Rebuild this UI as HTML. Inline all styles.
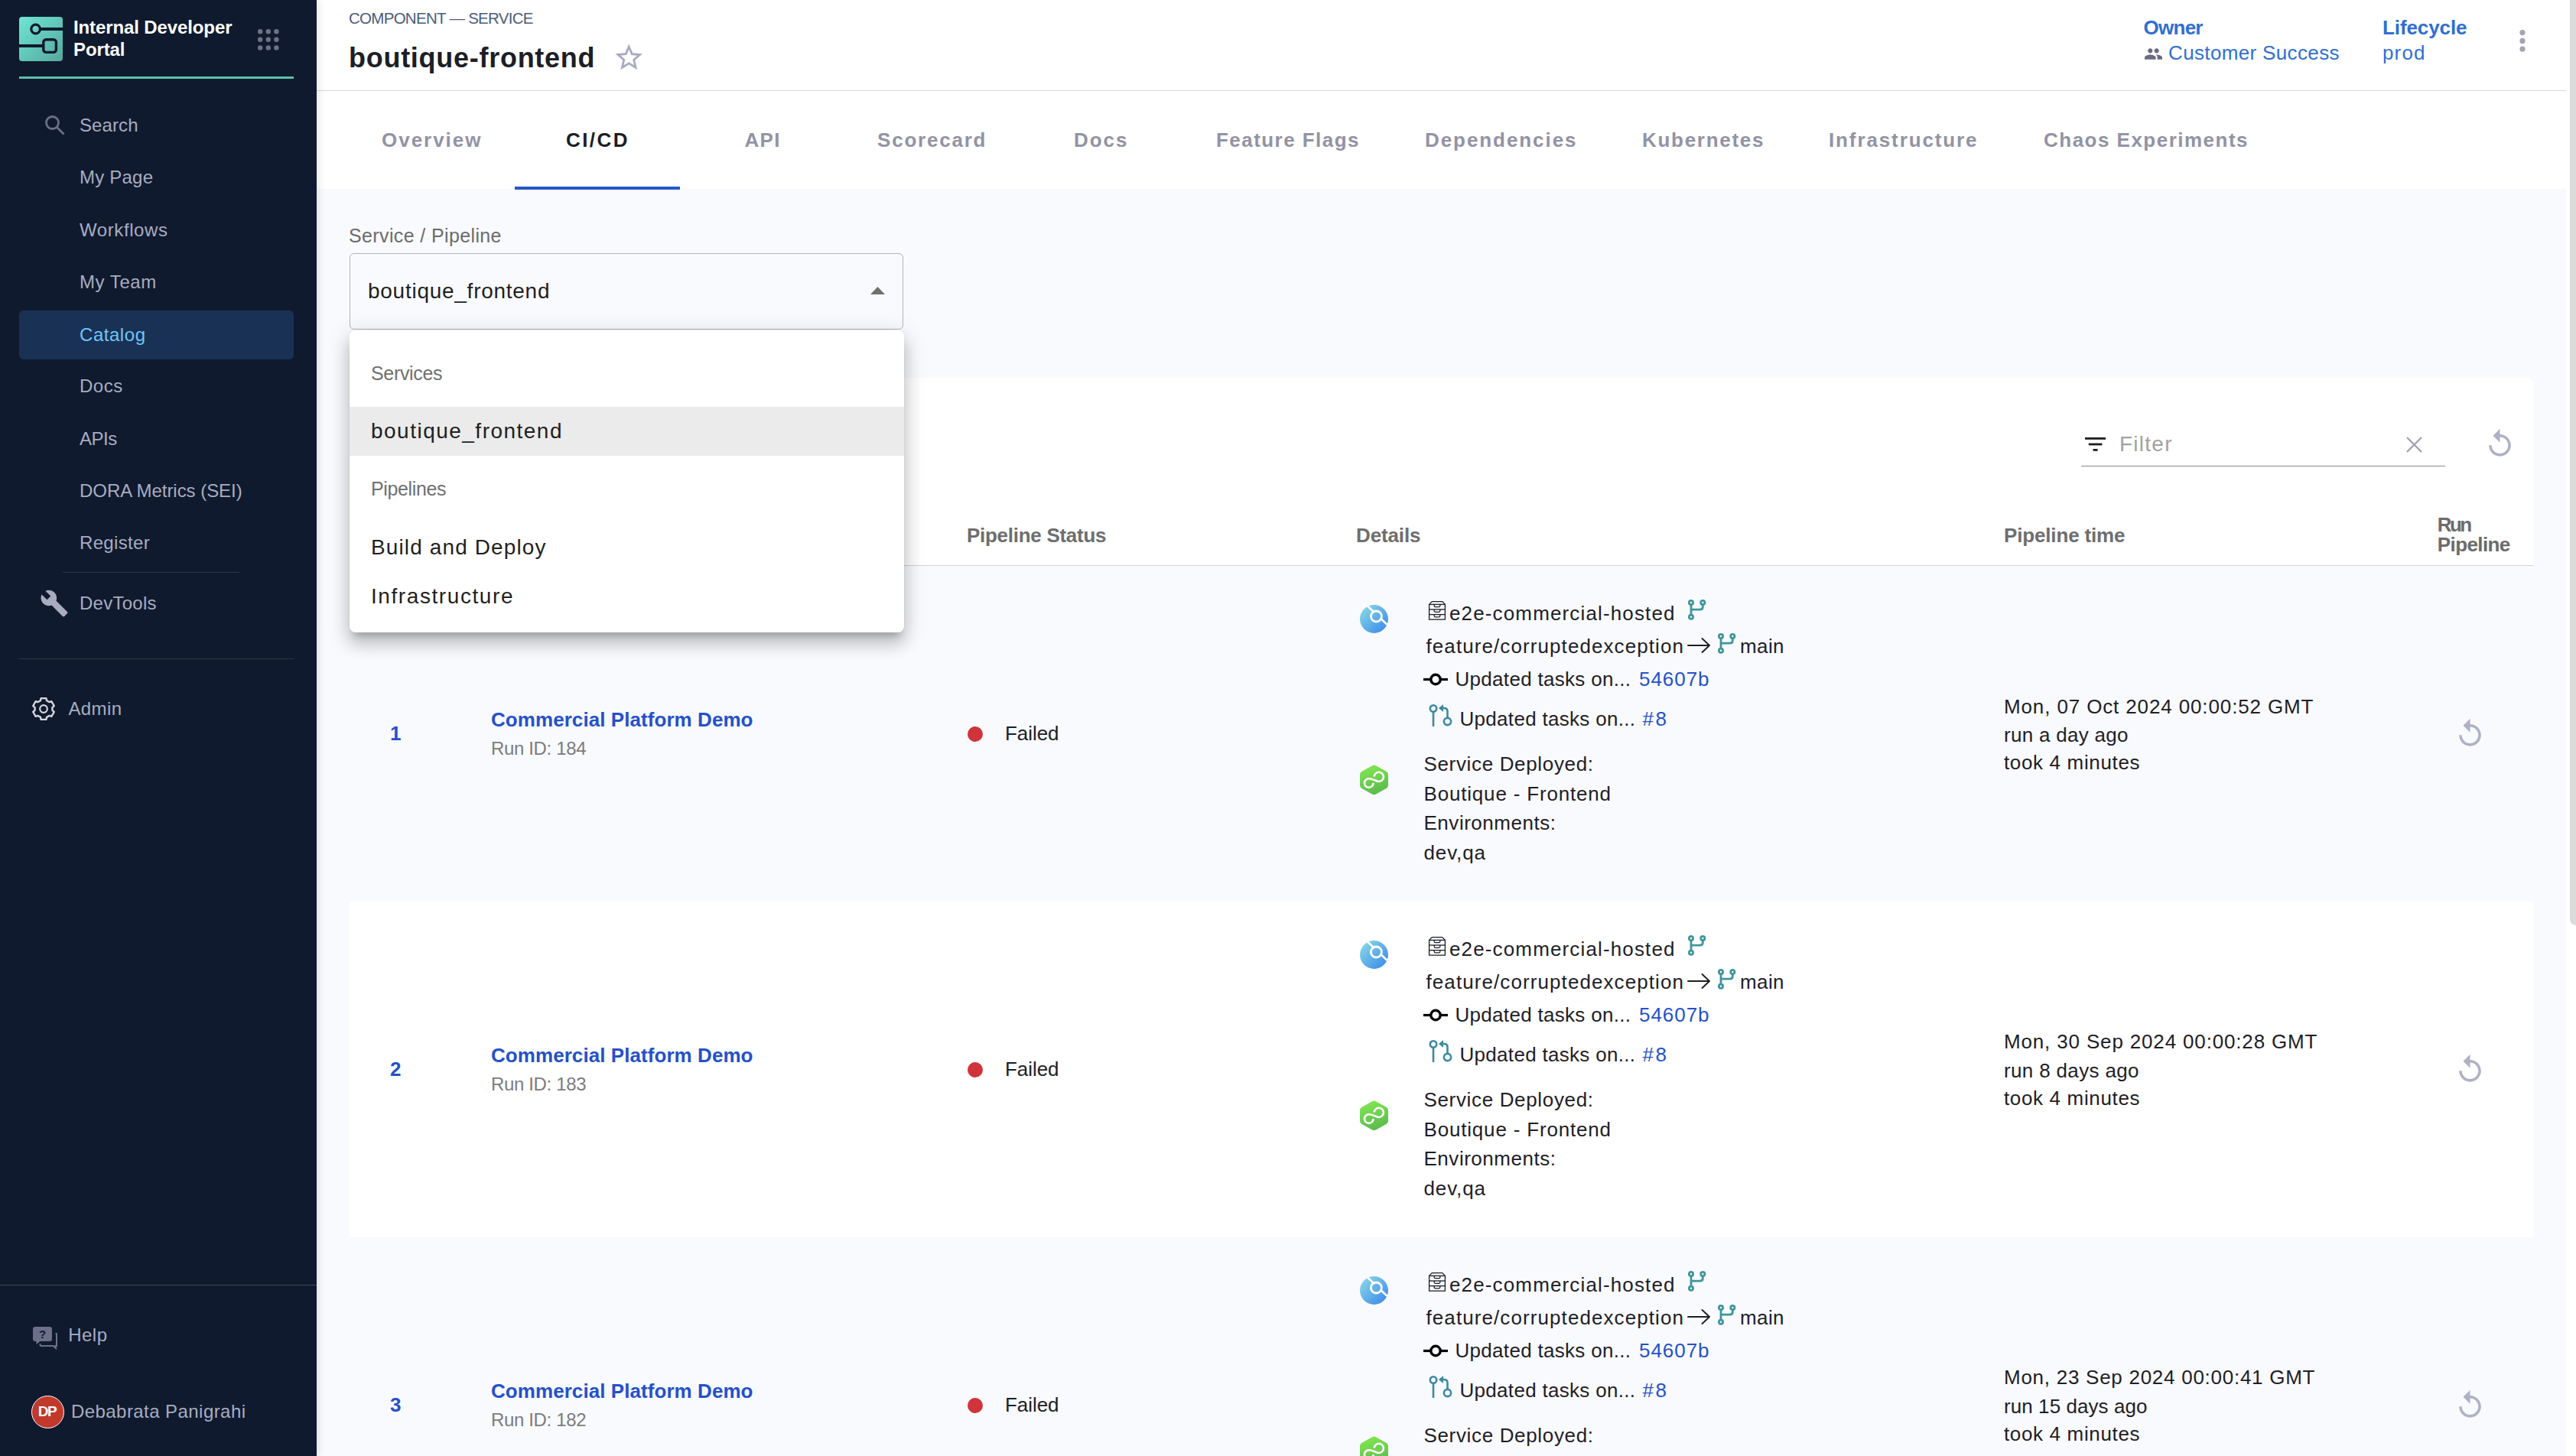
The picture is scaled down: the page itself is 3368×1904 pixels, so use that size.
<!DOCTYPE html>
<html><head><meta charset="utf-8"><style>
html,body{margin:0;padding:0;}
body{width:3368px;height:1904px;overflow:hidden;position:relative;background:#fff;font-family:'Liberation Sans', sans-serif;line-height:1;white-space:nowrap;}
</style></head><body>
<div style="position:absolute;left:414px;top:247px;width:2941px;height:1657px;background:#f9fafd"></div>
<div style="position:absolute;left:414px;top:117.8px;width:2941px;height:1.4000000000000057px;background:#d6d7e3"></div>
<div style="position:absolute;left:673px;top:244px;width:216px;height:4px;background:#2457c9"></div>
<div style="position:absolute;left:457px;top:494px;width:2855px;height:1410px;background:#fff;border-radius:8px 8px 0 0"></div>
<div style="position:absolute;left:457px;top:738.5px;width:2855px;height:1.5px;background:#d2d2d5"></div>
<div style="position:absolute;left:457px;top:740px;width:2855px;height:439px;background:#f9fafd"></div>
<div style="position:absolute;left:457px;top:1618px;width:2855px;height:286px;background:#f9fafd"></div>
<div style="position:absolute;left:0px;top:0px;width:414px;height:1904px;background:#0f1a2e;box-shadow:2px 0 10px rgba(0,0,0,0.12)"></div>
<svg style="position:absolute;left:25px;top:22px" width="57" height="58" viewBox="0 0 57 58"><defs><linearGradient id="lg" x1="0" y1="0" x2="1" y2="1"><stop offset="0" stop-color="#6fe5d6"/><stop offset="1" stop-color="#54a99b"/></linearGradient></defs>
<rect x="0" y="0" width="57" height="58" rx="4" fill="url(#lg)"/>
<circle cx="21.6" cy="16" r="5.8" fill="none" stroke="#0f1a2e" stroke-width="3.2"/>
<rect x="27" y="14" width="30" height="4" fill="#0f1a2e"/>
<rect x="31.8" y="29.8" width="16.6" height="16.6" rx="3.5" fill="none" stroke="#0f1a2e" stroke-width="3.4"/>
<rect x="0" y="36" width="31" height="4" fill="#0f1a2e"/></svg>
<svg style="position:absolute;left:337px;top:38px" width="28" height="28" viewBox="0 0 28 28"><circle cx="3.2" cy="3.2" r="3.2" fill="#6f7187"/><circle cx="3.2" cy="13.8" r="3.2" fill="#6f7187"/><circle cx="3.2" cy="24.4" r="3.2" fill="#6f7187"/><circle cx="13.8" cy="3.2" r="3.2" fill="#6f7187"/><circle cx="13.8" cy="13.8" r="3.2" fill="#6f7187"/><circle cx="13.8" cy="24.4" r="3.2" fill="#6f7187"/><circle cx="24.4" cy="3.2" r="3.2" fill="#6f7187"/><circle cx="24.4" cy="13.8" r="3.2" fill="#6f7187"/><circle cx="24.4" cy="24.4" r="3.2" fill="#6f7187"/></svg>
<div style="position:absolute;left:25px;top:100px;width:359px;height:3px;background:#5bbfa9"></div>
<svg style="position:absolute;left:58px;top:150px" width="27" height="27" viewBox="0 0 27 27"><circle cx="10.5" cy="10.5" r="8" fill="none" stroke="#6c6f86" stroke-width="2.8"/><line x1="16.5" y1="16.5" x2="25.5" y2="25.5" stroke="#6c6f86" stroke-width="2.8"/></svg>
<div style="position:absolute;left:25px;top:406px;width:359px;height:64px;background:#1a3156;border-radius:6px"></div>
<div style="position:absolute;left:82px;top:747.5px;width:231px;height:1.5px;background:#2e3647"></div>
<div style="position:absolute;left:25px;top:860.8px;width:359px;height:1.400000000000091px;background:#2e3647"></div>
<svg style="position:absolute;left:52px;top:770px" width="38" height="38" viewBox="0 0 24 24"><path d="M22.7 19l-9.1-9.1c.9-2.3.4-5-1.5-6.9-2-2-5-2.4-7.4-1.3L9 6 6 9 1.6 4.7C.4 7.1.9 10.1 2.9 12.1c1.9 1.9 4.6 2.4 6.9 1.5l9.1 9.1c.4.4 1 .4 1.4 0l2.3-2.3c.5-.4.5-1.1.1-1.4z" fill="#a9acc1"/></svg>
<svg style="position:absolute;left:41.2px;top:910.7px" width="32" height="32" viewBox="0 0 32 32"><path d="M11.91 5.14 L12.60 2.11 L19.40 2.11 L20.09 5.14 L23.36 7.03 L26.33 6.11 L29.73 12.00 L27.45 14.11 L27.45 17.89 L29.73 20.00 L26.33 25.89 L23.36 24.97 L20.09 26.86 L19.40 29.89 L12.60 29.89 L11.91 26.86 L8.64 24.97 L5.67 25.89 L2.27 20.00 L4.55 17.89 L4.55 14.11 L2.27 12.00 L5.67 6.11 L8.64 7.03 Z" fill="none" stroke="#d6d6d9" stroke-width="2.4" stroke-linejoin="round"/><circle cx="16" cy="16" r="4.8" fill="none" stroke="#d6d6d9" stroke-width="2.2"/></svg>
<svg style="position:absolute;left:43px;top:1735px" width="33" height="30" viewBox="0 0 33 30"><path d="M3 0 H22 Q25 0 25 3 V16 Q25 19 22 19 H9.5 L4.5 23 V19 H3 Q0 19 0 16 V3 Q0 0 3 0 Z" fill="#6e7089"/><text x="12.5" y="15" font-family="Liberation Sans" font-weight="700" font-size="15" text-anchor="middle" fill="#0f1a2e">?</text><path d="M29.5 9 H31 V25 H29.5 L30 28 L26.5 25 H11 Q9.5 25 9.5 23.5 V22" fill="none" stroke="#6e7089" stroke-width="2"/></svg>
<div style="position:absolute;left:0px;top:1679.5px;width:414px;height:1.5px;background:#414858"></div>
<div style="position:absolute;left:41px;top:1825px;width:43px;height:43px;background:#c0392b;border-radius:50%;border:1.5px solid #fff;box-sizing:border-box"></div>
<svg style="position:absolute;left:800.8px;top:54.4px" width="42.5" height="42.5" viewBox="0 0 24 24"><path d="M22 9.24l-7.19-.62L12 2 9.19 8.63 2 9.24l5.46 4.73L5.82 21 12 17.27 18.18 21l-1.63-7.03L22 9.24zM12 15.4l-3.76 2.27 1-4.28-3.32-2.88 4.38-.38L12 6.1l1.710 4.04 4.38.38-3.32 2.88 1 4.28L12 15.4z" fill="#a9abc0"/></svg>
<svg style="position:absolute;left:2803px;top:58px" width="25" height="25" viewBox="0 0 24 24"><path d="M16 11c1.66 0 2.99-1.34 2.99-3S17.66 5 16 5c-1.66 0-3 1.34-3 3s1.34 3 3 3zm-8 0c1.66 0 2.990-1.34 2.99-3S9.66 5 8 5C6.34 5 5 6.34 5 8s1.34 3 3 3zm0 2c-2.33 0-7 1.17-7 3.5V19h14v-2.5c0-2.33-4.67-3.5-7-3.5zm8 0c-.29 0-.62.02-.97.05 1.16.84 1.970 1.97 1.97 3.45V19h6v-2.5c0-2.33-4.67-3.5-7-3.5z" fill="#686b83"/></svg>
<svg style="position:absolute;left:3293px;top:39px" width="10" height="30" viewBox="0 0 10 30"><circle cx="5" cy="3.6" r="3.6" fill="#a3a5b5"/><circle cx="5" cy="14.4" r="3.6" fill="#a3a5b5"/><circle cx="5" cy="25.200000000000003" r="3.6" fill="#a3a5b5"/></svg>
<div style="position:absolute;left:457px;top:331px;width:724px;height:100px;border:1.5px solid #b4b4b8;border-radius:6px;box-sizing:border-box"></div>
<svg style="position:absolute;left:1138px;top:375px" width="19" height="10" viewBox="0 0 19 10"><path d="M0 10 L9.5 0 L19 10 Z" fill="#6f6f6f"/></svg>
<svg style="position:absolute;left:2725.5px;top:572px" width="28" height="19" viewBox="0 0 28 19"><rect x="0" y="0" width="27" height="2.8" fill="#1b1d24"/><rect x="4.8" y="7.6" width="17.6" height="2.8" fill="#1b1d24"/><rect x="10.6" y="15" width="6" height="2.8" fill="#1b1d24"/></svg>
<svg style="position:absolute;left:3146px;top:571px" width="21" height="21" viewBox="0 0 21 21"><path d="M1 1 L20 20 M20 1 L1 20" stroke="#9fa1b6" stroke-width="2.4"/></svg>
<div style="position:absolute;left:2721px;top:609px;width:476px;height:1px;background:#8a8a8a"></div>
<svg style="position:absolute;left:3247px;top:559px" width="43" height="43" viewBox="0 0 24 24"><path d="M12 5V1L7 6l5 5V7c3.31 0 6 2.69 6 6s-2.69 6-6 6-6-2.69-6-6H4c0 4.42 3.58 8 8 8s8-3.58 8-8-3.58-8-8-8z" fill="#afb1c5"/></svg>
<div style="position:absolute;left:1265px;top:950.0px;width:20px;height:20.0px;background:#d0343a;border-radius:50%"></div>
<svg style="position:absolute;left:1778px;top:791.0px" width="37" height="37" viewBox="0 0 37 37"><defs><linearGradient id="bg0" gradientUnits="userSpaceOnUse" x1="4" y1="4" x2="33" y2="33"><stop offset="0" stop-color="#86d4e6"/><stop offset="1" stop-color="#3f8eec"/></linearGradient></defs><circle cx="18.5" cy="18.5" r="18.5" fill="url(#bg0)"/><line x1="9.5" y1="1" x2="35.5" y2="25.8" stroke="#fff" stroke-width="2.6"/><circle cx="21.4" cy="15" r="7" fill="url(#bg0)" stroke="#fff" stroke-width="2.8"/></svg>
<svg style="position:absolute;left:1778px;top:1000.0px" width="37" height="40" viewBox="0 0 37 40"><defs><linearGradient id="gg0" x1="0" y1="0" x2="0.3" y2="1"><stop offset="0" stop-color="#86ea52"/><stop offset="1" stop-color="#5dbd4e"/></linearGradient></defs><path d="M16 1.2 Q18.5 0 21 1.2 L34.5 8.8 Q37 10.2 37 13 V27 Q37 29.6 34.5 31 L21 38.6 Q18.5 40 16 38.6 L2.5 31 Q0 29.6 0 27 V13 Q0 10.2 2.5 8.8 Z" fill="url(#gg0)"/><path d="M17.5 24.1 A5.8 5.8 0 1 1 11.7 18.3 C14.5 18.3 16 19 18.3 19.8 C20.5 20.7 22.5 22 24.9 22 A6.1 6.1 0 1 0 18.7 15.5" fill="none" stroke="#fff" stroke-width="2.6"/></svg>
<svg style="position:absolute;left:1867px;top:785.0px" width="24" height="27" viewBox="0 0 24 27"><g transform="translate(1 1)"><path d="M0.6 4.4 L4.2 0.6 H17.8 L21.4 4.4 V24.2 H0.6 Z" fill="none" stroke="#1b1d24" stroke-width="1.3" stroke-linejoin="round"/><line x1="0.6" y1="4.4" x2="21.4" y2="4.4" stroke="#1b1d24" stroke-width="1.3"/><line x1="0.6" y1="11" x2="21.4" y2="11" stroke="#1b1d24" stroke-width="1.3"/><line x1="0.6" y1="17.6" x2="21.4" y2="17.6" stroke="#1b1d24" stroke-width="1.3"/><path d="M7.2 4.4 V6.2 Q7.2 7.7 8.7 7.7 H13.3 Q14.8 7.7 14.8 6.2 V4.4" fill="none" stroke="#1b1d24" stroke-width="1.3"/><path d="M7.2 11 V12.8 Q7.2 14.3 8.7 14.3 H13.3 Q14.8 14.3 14.8 12.8 V11" fill="none" stroke="#1b1d24" stroke-width="1.3"/><path d="M7.2 17.6 V19.400000000000002 Q7.2 20.900000000000002 8.7 20.900000000000002 H13.3 Q14.8 20.900000000000002 14.8 19.400000000000002 V17.6" fill="none" stroke="#1b1d24" stroke-width="1.3"/></g></svg>
<svg style="position:absolute;left:2206.8px;top:784.1px" width="24" height="27" viewBox="0 0 24 27"><g transform="translate(4 4)" fill="none" stroke="#3f969c" stroke-width="2.8"><circle cx="0" cy="0" r="2.6"/><circle cx="15.3" cy="0" r="2.6"/><circle cx="0" cy="18.8" r="2.6"/><path d="M0 2.6 V16.2 M0 9.2 H11.5 Q15.3 9.2 15.3 5.4 V2.6"/></g></svg>
<svg style="position:absolute;left:2206px;top:834.0px" width="31" height="21" viewBox="0 0 31 21"><path d="M1 10 H29 M19.5 1 L29 10 L19.5 19" fill="none" stroke="#1e2027" stroke-width="1.9" stroke-linecap="round" stroke-linejoin="round"/></svg>
<svg style="position:absolute;left:2245.7px;top:827.9px" width="24" height="27" viewBox="0 0 24 27"><g transform="translate(4 4)" fill="none" stroke="#3f969c" stroke-width="2.8"><circle cx="0" cy="0" r="2.6"/><circle cx="15.3" cy="0" r="2.6"/><circle cx="0" cy="18.8" r="2.6"/><path d="M0 2.6 V16.2 M0 9.2 H11.5 Q15.3 9.2 15.3 5.4 V2.6"/></g></svg>
<svg style="position:absolute;left:1861px;top:879.0px" width="32" height="19" viewBox="0 0 32 19"><circle cx="16" cy="9.5" r="6.2" fill="none" stroke="#000" stroke-width="3.4"/><line x1="0" y1="9.5" x2="9.8" y2="9.5" stroke="#000" stroke-width="3.2"/><line x1="22.2" y1="9.5" x2="32" y2="9.5" stroke="#000" stroke-width="3.2"/></svg>
<svg style="position:absolute;left:1867px;top:921.0px" width="33" height="29" viewBox="0 0 33 29"><circle cx="7" cy="5.5" r="4.2" fill="none" stroke="#3d8aa0" stroke-width="2.6"/><line x1="7" y1="10" x2="7" y2="29" stroke="#3d8aa0" stroke-width="2.6"/><circle cx="25.5" cy="22.5" r="4.6" fill="none" stroke="#3d8aa0" stroke-width="2.6"/><path d="M25.5 18 L25.5 9 Q25.5 5 21 5 L18 5" fill="none" stroke="#3d8aa0" stroke-width="2.6"/><path d="M20 0 L14 5 L20 10 Z" fill="#3d8aa0"/></svg>
<svg style="position:absolute;left:3208px;top:938.0px" width="43" height="43" viewBox="0 0 24 24"><path d="M12 5V1L7 6l5 5V7c3.31 0 6 2.69 6 6s-2.69 6-6 6-6-2.69-6-6H4c0 4.42 3.58 8 8 8s8-3.58 8-8-3.58-8-8-8z" fill="#afb1c5"/></svg>
<div style="position:absolute;left:1265px;top:1388.9px;width:20px;height:20.0px;background:#d0343a;border-radius:50%"></div>
<svg style="position:absolute;left:1778px;top:1229.9px" width="37" height="37" viewBox="0 0 37 37"><defs><linearGradient id="bg1" gradientUnits="userSpaceOnUse" x1="4" y1="4" x2="33" y2="33"><stop offset="0" stop-color="#86d4e6"/><stop offset="1" stop-color="#3f8eec"/></linearGradient></defs><circle cx="18.5" cy="18.5" r="18.5" fill="url(#bg1)"/><line x1="9.5" y1="1" x2="35.5" y2="25.8" stroke="#fff" stroke-width="2.6"/><circle cx="21.4" cy="15" r="7" fill="url(#bg1)" stroke="#fff" stroke-width="2.8"/></svg>
<svg style="position:absolute;left:1778px;top:1438.9px" width="37" height="40" viewBox="0 0 37 40"><defs><linearGradient id="gg1" x1="0" y1="0" x2="0.3" y2="1"><stop offset="0" stop-color="#86ea52"/><stop offset="1" stop-color="#5dbd4e"/></linearGradient></defs><path d="M16 1.2 Q18.5 0 21 1.2 L34.5 8.8 Q37 10.2 37 13 V27 Q37 29.6 34.5 31 L21 38.6 Q18.5 40 16 38.6 L2.5 31 Q0 29.6 0 27 V13 Q0 10.2 2.5 8.8 Z" fill="url(#gg1)"/><path d="M17.5 24.1 A5.8 5.8 0 1 1 11.7 18.3 C14.5 18.3 16 19 18.3 19.8 C20.5 20.7 22.5 22 24.9 22 A6.1 6.1 0 1 0 18.7 15.5" fill="none" stroke="#fff" stroke-width="2.6"/></svg>
<svg style="position:absolute;left:1867px;top:1223.9px" width="24" height="27" viewBox="0 0 24 27"><g transform="translate(1 1)"><path d="M0.6 4.4 L4.2 0.6 H17.8 L21.4 4.4 V24.2 H0.6 Z" fill="none" stroke="#1b1d24" stroke-width="1.3" stroke-linejoin="round"/><line x1="0.6" y1="4.4" x2="21.4" y2="4.4" stroke="#1b1d24" stroke-width="1.3"/><line x1="0.6" y1="11" x2="21.4" y2="11" stroke="#1b1d24" stroke-width="1.3"/><line x1="0.6" y1="17.6" x2="21.4" y2="17.6" stroke="#1b1d24" stroke-width="1.3"/><path d="M7.2 4.4 V6.2 Q7.2 7.7 8.7 7.7 H13.3 Q14.8 7.7 14.8 6.2 V4.4" fill="none" stroke="#1b1d24" stroke-width="1.3"/><path d="M7.2 11 V12.8 Q7.2 14.3 8.7 14.3 H13.3 Q14.8 14.3 14.8 12.8 V11" fill="none" stroke="#1b1d24" stroke-width="1.3"/><path d="M7.2 17.6 V19.400000000000002 Q7.2 20.900000000000002 8.7 20.900000000000002 H13.3 Q14.8 20.900000000000002 14.8 19.400000000000002 V17.6" fill="none" stroke="#1b1d24" stroke-width="1.3"/></g></svg>
<svg style="position:absolute;left:2206.8px;top:1223.0px" width="24" height="27" viewBox="0 0 24 27"><g transform="translate(4 4)" fill="none" stroke="#3f969c" stroke-width="2.8"><circle cx="0" cy="0" r="2.6"/><circle cx="15.3" cy="0" r="2.6"/><circle cx="0" cy="18.8" r="2.6"/><path d="M0 2.6 V16.2 M0 9.2 H11.5 Q15.3 9.2 15.3 5.4 V2.6"/></g></svg>
<svg style="position:absolute;left:2206px;top:1272.9px" width="31" height="21" viewBox="0 0 31 21"><path d="M1 10 H29 M19.5 1 L29 10 L19.5 19" fill="none" stroke="#1e2027" stroke-width="1.9" stroke-linecap="round" stroke-linejoin="round"/></svg>
<svg style="position:absolute;left:2245.7px;top:1266.8px" width="24" height="27" viewBox="0 0 24 27"><g transform="translate(4 4)" fill="none" stroke="#3f969c" stroke-width="2.8"><circle cx="0" cy="0" r="2.6"/><circle cx="15.3" cy="0" r="2.6"/><circle cx="0" cy="18.8" r="2.6"/><path d="M0 2.6 V16.2 M0 9.2 H11.5 Q15.3 9.2 15.3 5.4 V2.6"/></g></svg>
<svg style="position:absolute;left:1861px;top:1317.9px" width="32" height="19" viewBox="0 0 32 19"><circle cx="16" cy="9.5" r="6.2" fill="none" stroke="#000" stroke-width="3.4"/><line x1="0" y1="9.5" x2="9.8" y2="9.5" stroke="#000" stroke-width="3.2"/><line x1="22.2" y1="9.5" x2="32" y2="9.5" stroke="#000" stroke-width="3.2"/></svg>
<svg style="position:absolute;left:1867px;top:1359.9px" width="33" height="29" viewBox="0 0 33 29"><circle cx="7" cy="5.5" r="4.2" fill="none" stroke="#3d8aa0" stroke-width="2.6"/><line x1="7" y1="10" x2="7" y2="29" stroke="#3d8aa0" stroke-width="2.6"/><circle cx="25.5" cy="22.5" r="4.6" fill="none" stroke="#3d8aa0" stroke-width="2.6"/><path d="M25.5 18 L25.5 9 Q25.5 5 21 5 L18 5" fill="none" stroke="#3d8aa0" stroke-width="2.6"/><path d="M20 0 L14 5 L20 10 Z" fill="#3d8aa0"/></svg>
<svg style="position:absolute;left:3208px;top:1376.9px" width="43" height="43" viewBox="0 0 24 24"><path d="M12 5V1L7 6l5 5V7c3.31 0 6 2.69 6 6s-2.69 6-6 6-6-2.69-6-6H4c0 4.42 3.58 8 8 8s8-3.58 8-8-3.58-8-8-8z" fill="#afb1c5"/></svg>
<div style="position:absolute;left:1265px;top:1827.8px;width:20px;height:20.0px;background:#d0343a;border-radius:50%"></div>
<svg style="position:absolute;left:1778px;top:1668.8px" width="37" height="37" viewBox="0 0 37 37"><defs><linearGradient id="bg2" gradientUnits="userSpaceOnUse" x1="4" y1="4" x2="33" y2="33"><stop offset="0" stop-color="#86d4e6"/><stop offset="1" stop-color="#3f8eec"/></linearGradient></defs><circle cx="18.5" cy="18.5" r="18.5" fill="url(#bg2)"/><line x1="9.5" y1="1" x2="35.5" y2="25.8" stroke="#fff" stroke-width="2.6"/><circle cx="21.4" cy="15" r="7" fill="url(#bg2)" stroke="#fff" stroke-width="2.8"/></svg>
<svg style="position:absolute;left:1778px;top:1877.8px" width="37" height="40" viewBox="0 0 37 40"><defs><linearGradient id="gg2" x1="0" y1="0" x2="0.3" y2="1"><stop offset="0" stop-color="#86ea52"/><stop offset="1" stop-color="#5dbd4e"/></linearGradient></defs><path d="M16 1.2 Q18.5 0 21 1.2 L34.5 8.8 Q37 10.2 37 13 V27 Q37 29.6 34.5 31 L21 38.6 Q18.5 40 16 38.6 L2.5 31 Q0 29.6 0 27 V13 Q0 10.2 2.5 8.8 Z" fill="url(#gg2)"/><path d="M17.5 24.1 A5.8 5.8 0 1 1 11.7 18.3 C14.5 18.3 16 19 18.3 19.8 C20.5 20.7 22.5 22 24.9 22 A6.1 6.1 0 1 0 18.7 15.5" fill="none" stroke="#fff" stroke-width="2.6"/></svg>
<svg style="position:absolute;left:1867px;top:1662.8px" width="24" height="27" viewBox="0 0 24 27"><g transform="translate(1 1)"><path d="M0.6 4.4 L4.2 0.6 H17.8 L21.4 4.4 V24.2 H0.6 Z" fill="none" stroke="#1b1d24" stroke-width="1.3" stroke-linejoin="round"/><line x1="0.6" y1="4.4" x2="21.4" y2="4.4" stroke="#1b1d24" stroke-width="1.3"/><line x1="0.6" y1="11" x2="21.4" y2="11" stroke="#1b1d24" stroke-width="1.3"/><line x1="0.6" y1="17.6" x2="21.4" y2="17.6" stroke="#1b1d24" stroke-width="1.3"/><path d="M7.2 4.4 V6.2 Q7.2 7.7 8.7 7.7 H13.3 Q14.8 7.7 14.8 6.2 V4.4" fill="none" stroke="#1b1d24" stroke-width="1.3"/><path d="M7.2 11 V12.8 Q7.2 14.3 8.7 14.3 H13.3 Q14.8 14.3 14.8 12.8 V11" fill="none" stroke="#1b1d24" stroke-width="1.3"/><path d="M7.2 17.6 V19.400000000000002 Q7.2 20.900000000000002 8.7 20.900000000000002 H13.3 Q14.8 20.900000000000002 14.8 19.400000000000002 V17.6" fill="none" stroke="#1b1d24" stroke-width="1.3"/></g></svg>
<svg style="position:absolute;left:2206.8px;top:1661.9px" width="24" height="27" viewBox="0 0 24 27"><g transform="translate(4 4)" fill="none" stroke="#3f969c" stroke-width="2.8"><circle cx="0" cy="0" r="2.6"/><circle cx="15.3" cy="0" r="2.6"/><circle cx="0" cy="18.8" r="2.6"/><path d="M0 2.6 V16.2 M0 9.2 H11.5 Q15.3 9.2 15.3 5.4 V2.6"/></g></svg>
<svg style="position:absolute;left:2206px;top:1711.8px" width="31" height="21" viewBox="0 0 31 21"><path d="M1 10 H29 M19.5 1 L29 10 L19.5 19" fill="none" stroke="#1e2027" stroke-width="1.9" stroke-linecap="round" stroke-linejoin="round"/></svg>
<svg style="position:absolute;left:2245.7px;top:1705.6999999999998px" width="24" height="27" viewBox="0 0 24 27"><g transform="translate(4 4)" fill="none" stroke="#3f969c" stroke-width="2.8"><circle cx="0" cy="0" r="2.6"/><circle cx="15.3" cy="0" r="2.6"/><circle cx="0" cy="18.8" r="2.6"/><path d="M0 2.6 V16.2 M0 9.2 H11.5 Q15.3 9.2 15.3 5.4 V2.6"/></g></svg>
<svg style="position:absolute;left:1861px;top:1756.8px" width="32" height="19" viewBox="0 0 32 19"><circle cx="16" cy="9.5" r="6.2" fill="none" stroke="#000" stroke-width="3.4"/><line x1="0" y1="9.5" x2="9.8" y2="9.5" stroke="#000" stroke-width="3.2"/><line x1="22.2" y1="9.5" x2="32" y2="9.5" stroke="#000" stroke-width="3.2"/></svg>
<svg style="position:absolute;left:1867px;top:1798.8px" width="33" height="29" viewBox="0 0 33 29"><circle cx="7" cy="5.5" r="4.2" fill="none" stroke="#3d8aa0" stroke-width="2.6"/><line x1="7" y1="10" x2="7" y2="29" stroke="#3d8aa0" stroke-width="2.6"/><circle cx="25.5" cy="22.5" r="4.6" fill="none" stroke="#3d8aa0" stroke-width="2.6"/><path d="M25.5 18 L25.5 9 Q25.5 5 21 5 L18 5" fill="none" stroke="#3d8aa0" stroke-width="2.6"/><path d="M20 0 L14 5 L20 10 Z" fill="#3d8aa0"/></svg>
<svg style="position:absolute;left:3208px;top:1815.8px" width="43" height="43" viewBox="0 0 24 24"><path d="M12 5V1L7 6l5 5V7c3.31 0 6 2.69 6 6s-2.69 6-6 6-6-2.69-6-6H4c0 4.42 3.58 8 8 8s8-3.58 8-8-3.58-8-8-8z" fill="#afb1c5"/></svg>
<div id="t0" style="position:absolute;left:96.00px;top:23.60px;font-size:24px;font-weight:700;color:#ffffff;letter-spacing:-0.112px;">Internal Developer</div>
<div id="t1" style="position:absolute;left:96.00px;top:52.60px;font-size:24px;font-weight:700;color:#ffffff;letter-spacing:-0.103px;">Portal</div>
<div id="t2" style="position:absolute;left:104.00px;top:151.90px;font-size:24px;font-weight:400;color:#a9acc1;letter-spacing:0.091px;">Search</div>
<div id="t3" style="position:absolute;left:104.00px;top:219.90px;font-size:24px;font-weight:400;color:#a9acc1;letter-spacing:0.214px;">My Page</div>
<div id="t4" style="position:absolute;left:104.00px;top:288.60px;font-size:24px;font-weight:400;color:#a9acc1;letter-spacing:0.581px;">Workflows</div>
<div id="t5" style="position:absolute;left:104.00px;top:356.80px;font-size:24px;font-weight:400;color:#a9acc1;letter-spacing:0.546px;">My Team</div>
<div id="t6" style="position:absolute;left:104.00px;top:426.20px;font-size:24px;font-weight:400;color:#6fc6f7;letter-spacing:0.544px;">Catalog</div>
<div id="t7" style="position:absolute;left:104.00px;top:493.30px;font-size:24px;font-weight:400;color:#a9acc1;letter-spacing:0.504px;">Docs</div>
<div id="t8" style="position:absolute;left:104.00px;top:561.90px;font-size:24px;font-weight:400;color:#a9acc1;letter-spacing:-0.496px;">APIs</div>
<div id="t9" style="position:absolute;left:104.00px;top:630.20px;font-size:24px;font-weight:400;color:#a9acc1;letter-spacing:-0.039px;">DORA Metrics (SEI)</div>
<div id="t10" style="position:absolute;left:104.00px;top:698.20px;font-size:24px;font-weight:400;color:#a9acc1;letter-spacing:0.346px;">Register</div>
<div id="t11" style="position:absolute;left:104.00px;top:776.60px;font-size:24px;font-weight:400;color:#a9acc1;letter-spacing:0.254px;">DevTools</div>
<div id="t12" style="position:absolute;left:89.50px;top:914.60px;font-size:24px;font-weight:400;color:#a9acc1;letter-spacing:0.367px;">Admin</div>
<div id="t13" style="position:absolute;left:89.20px;top:1734.10px;font-size:24px;font-weight:400;color:#a9acc1;letter-spacing:0.480px;">Help</div>
<div id="t14" style="position:absolute;left:49.70px;top:1836.05px;font-size:19px;font-weight:700;color:#ffffff;letter-spacing:-1.506px;">DP</div>
<div id="t15" style="position:absolute;left:93.00px;top:1833.90px;font-size:24px;font-weight:400;color:#a9acc1;letter-spacing:0.436px;">Debabrata Panigrahi</div>
<div id="t16" style="position:absolute;left:456.00px;top:14.38px;font-size:20.5px;font-weight:400;color:#4b5b7a;letter-spacing:-0.717px;">COMPONENT — SERVICE</div>
<div id="t17" style="position:absolute;left:456.00px;top:57.90px;font-size:36px;font-weight:700;color:#1d1e26;letter-spacing:0.724px;">boutique-frontend</div>
<div id="t18" style="position:absolute;left:2802.60px;top:23.20px;font-size:26px;font-weight:700;color:#2f6fd1;letter-spacing:-0.755px;">Owner</div>
<div id="t19" style="position:absolute;left:2835.00px;top:55.90px;font-size:26px;font-weight:400;color:#2f6fd1;letter-spacing:0.354px;">Customer Success</div>
<div id="t20" style="position:absolute;left:3115.00px;top:23.20px;font-size:26px;font-weight:700;color:#2f6fd1;letter-spacing:-0.100px;">Lifecycle</div>
<div id="t21" style="position:absolute;left:3115.00px;top:55.90px;font-size:26px;font-weight:400;color:#2f6fd1;letter-spacing:1.151px;">prod</div>
<div id="t22" style="position:absolute;left:499.00px;top:170.10px;font-size:26px;font-weight:700;color:#9293a5;letter-spacing:1.980px;">Overview</div>
<div id="t23" style="position:absolute;left:740.00px;top:170.10px;font-size:26px;font-weight:700;color:#1c1d26;letter-spacing:2.430px;">CI/CD</div>
<div id="t24" style="position:absolute;left:973.50px;top:170.10px;font-size:26px;font-weight:700;color:#9293a5;letter-spacing:1.328px;">API</div>
<div id="t25" style="position:absolute;left:1147.00px;top:170.10px;font-size:26px;font-weight:700;color:#9293a5;letter-spacing:1.789px;">Scorecard</div>
<div id="t26" style="position:absolute;left:1404.00px;top:170.10px;font-size:26px;font-weight:700;color:#9293a5;letter-spacing:1.974px;">Docs</div>
<div id="t27" style="position:absolute;left:1590.00px;top:170.10px;font-size:26px;font-weight:700;color:#9293a5;letter-spacing:1.453px;">Feature Flags</div>
<div id="t28" style="position:absolute;left:1863.00px;top:170.10px;font-size:26px;font-weight:700;color:#9293a5;letter-spacing:1.928px;">Dependencies</div>
<div id="t29" style="position:absolute;left:2147.00px;top:170.10px;font-size:26px;font-weight:700;color:#9293a5;letter-spacing:1.717px;">Kubernetes</div>
<div id="t30" style="position:absolute;left:2391.00px;top:170.10px;font-size:26px;font-weight:700;color:#9293a5;letter-spacing:1.881px;">Infrastructure</div>
<div id="t31" style="position:absolute;left:2672.00px;top:170.10px;font-size:26px;font-weight:700;color:#9293a5;letter-spacing:1.484px;">Chaos Experiments</div>
<div id="t32" style="position:absolute;left:456.00px;top:296.45px;font-size:25px;font-weight:400;color:#6b6b6b;letter-spacing:0.373px;">Service / Pipeline</div>
<div id="t33" style="position:absolute;left:481.00px;top:367.20px;font-size:28px;font-weight:400;color:#1f1f1f;letter-spacing:0.734px;">boutique_frontend</div>
<div id="t34" style="position:absolute;left:2771.00px;top:566.50px;font-size:28px;font-weight:400;color:#a2a2a2;letter-spacing:1.253px;">Filter</div>
<div id="t35" style="position:absolute;left:1264.00px;top:686.60px;font-size:26px;font-weight:700;color:#6e6e6e;letter-spacing:-0.278px;">Pipeline Status</div>
<div id="t36" style="position:absolute;left:1773.00px;top:686.60px;font-size:26px;font-weight:700;color:#6e6e6e;letter-spacing:-0.128px;">Details</div>
<div id="t37" style="position:absolute;left:2620.00px;top:686.90px;font-size:26px;font-weight:700;color:#6e6e6e;letter-spacing:-0.158px;">Pipeline time</div>
<div id="t38" style="position:absolute;left:3186.80px;top:672.70px;font-size:26px;font-weight:700;color:#6b6b6b;letter-spacing:-2.623px;">Run</div>
<div id="t39" style="position:absolute;left:3186.80px;top:698.60px;font-size:26px;font-weight:700;color:#6b6b6b;letter-spacing:-0.600px;">Pipeline</div>
<div id="t40" style="position:absolute;left:510.00px;top:946.00px;font-size:26px;font-weight:700;color:#2451c9;">1</div>
<div id="t41" style="position:absolute;left:642.00px;top:927.70px;font-size:26px;font-weight:700;color:#2451c9;letter-spacing:0.066px;">Commercial Platform Demo</div>
<div id="t42" style="position:absolute;left:642.00px;top:966.70px;font-size:24px;font-weight:400;color:#7c7c7c;letter-spacing:-0.358px;">Run ID: 184</div>
<div id="t43" style="position:absolute;left:1314.00px;top:945.90px;font-size:26px;font-weight:400;color:#1e2027;letter-spacing:-0.066px;">Failed</div>
<div id="t44" style="position:absolute;left:1895.00px;top:789.30px;font-size:26px;font-weight:400;color:#1e2027;letter-spacing:1.141px;">e2e-commercial-hosted</div>
<div id="t45" style="position:absolute;left:1864.50px;top:832.20px;font-size:26px;font-weight:400;color:#1e2027;letter-spacing:1.087px;">feature/corruptedexception</div>
<div id="t46" style="position:absolute;left:2275.00px;top:832.20px;font-size:26px;font-weight:400;color:#1e2027;letter-spacing:0.380px;">main</div>
<div id="t47" style="position:absolute;left:1902.50px;top:875.30px;font-size:26px;font-weight:400;color:#1e2027;letter-spacing:0.304px;">Updated tasks on...</div>
<div id="t48" style="position:absolute;left:2143.00px;top:875.30px;font-size:26px;font-weight:400;color:#2451c9;letter-spacing:0.947px;">54607b</div>
<div id="t49" style="position:absolute;left:1908.50px;top:926.80px;font-size:26px;font-weight:400;color:#1e2027;letter-spacing:0.304px;">Updated tasks on...</div>
<div id="t50" style="position:absolute;left:2147.50px;top:926.80px;font-size:26px;font-weight:400;color:#2451c9;letter-spacing:2.578px;">#8</div>
<div id="t51" style="position:absolute;left:1861.50px;top:985.70px;font-size:26px;font-weight:400;color:#1e2027;letter-spacing:0.656px;">Service Deployed:</div>
<div id="t52" style="position:absolute;left:1861.50px;top:1025.10px;font-size:26px;font-weight:400;color:#1e2027;letter-spacing:0.816px;">Boutique - Frontend</div>
<div id="t53" style="position:absolute;left:1861.50px;top:1063.40px;font-size:26px;font-weight:400;color:#1e2027;letter-spacing:0.526px;">Environments:</div>
<div id="t54" style="position:absolute;left:1861.50px;top:1102.20px;font-size:26px;font-weight:400;color:#1e2027;letter-spacing:0.872px;">dev,qa</div>
<div id="t55" style="position:absolute;left:2620.00px;top:910.50px;font-size:26px;font-weight:400;color:#1e2027;letter-spacing:0.871px;">Mon, 07 Oct 2024 00:00:52 GMT</div>
<div id="t56" style="position:absolute;left:2620.00px;top:948.10px;font-size:26px;font-weight:400;color:#1e2027;letter-spacing:0.290px;">run a day ago</div>
<div id="t57" style="position:absolute;left:2620.00px;top:983.90px;font-size:26px;font-weight:400;color:#1e2027;letter-spacing:0.647px;">took 4 minutes</div>
<div id="t58" style="position:absolute;left:510.00px;top:1384.90px;font-size:26px;font-weight:700;color:#2451c9;">2</div>
<div id="t59" style="position:absolute;left:642.00px;top:1366.60px;font-size:26px;font-weight:700;color:#2451c9;letter-spacing:0.066px;">Commercial Platform Demo</div>
<div id="t60" style="position:absolute;left:642.00px;top:1405.60px;font-size:24px;font-weight:400;color:#7c7c7c;letter-spacing:-0.358px;">Run ID: 183</div>
<div id="t61" style="position:absolute;left:1314.00px;top:1384.80px;font-size:26px;font-weight:400;color:#1e2027;letter-spacing:-0.066px;">Failed</div>
<div id="t62" style="position:absolute;left:1895.00px;top:1228.20px;font-size:26px;font-weight:400;color:#1e2027;letter-spacing:1.141px;">e2e-commercial-hosted</div>
<div id="t63" style="position:absolute;left:1864.50px;top:1271.10px;font-size:26px;font-weight:400;color:#1e2027;letter-spacing:1.087px;">feature/corruptedexception</div>
<div id="t64" style="position:absolute;left:2275.00px;top:1271.10px;font-size:26px;font-weight:400;color:#1e2027;letter-spacing:0.380px;">main</div>
<div id="t65" style="position:absolute;left:1902.50px;top:1314.20px;font-size:26px;font-weight:400;color:#1e2027;letter-spacing:0.304px;">Updated tasks on...</div>
<div id="t66" style="position:absolute;left:2143.00px;top:1314.20px;font-size:26px;font-weight:400;color:#2451c9;letter-spacing:0.947px;">54607b</div>
<div id="t67" style="position:absolute;left:1908.50px;top:1365.70px;font-size:26px;font-weight:400;color:#1e2027;letter-spacing:0.304px;">Updated tasks on...</div>
<div id="t68" style="position:absolute;left:2147.50px;top:1365.70px;font-size:26px;font-weight:400;color:#2451c9;letter-spacing:2.578px;">#8</div>
<div id="t69" style="position:absolute;left:1861.50px;top:1424.60px;font-size:26px;font-weight:400;color:#1e2027;letter-spacing:0.656px;">Service Deployed:</div>
<div id="t70" style="position:absolute;left:1861.50px;top:1464.00px;font-size:26px;font-weight:400;color:#1e2027;letter-spacing:0.816px;">Boutique - Frontend</div>
<div id="t71" style="position:absolute;left:1861.50px;top:1502.30px;font-size:26px;font-weight:400;color:#1e2027;letter-spacing:0.526px;">Environments:</div>
<div id="t72" style="position:absolute;left:1861.50px;top:1541.10px;font-size:26px;font-weight:400;color:#1e2027;letter-spacing:0.872px;">dev,qa</div>
<div id="t73" style="position:absolute;left:2620.00px;top:1349.40px;font-size:26px;font-weight:400;color:#1e2027;letter-spacing:0.842px;">Mon, 30 Sep 2024 00:00:28 GMT</div>
<div id="t74" style="position:absolute;left:2620.00px;top:1387.00px;font-size:26px;font-weight:400;color:#1e2027;letter-spacing:0.345px;">run 8 days ago</div>
<div id="t75" style="position:absolute;left:2620.00px;top:1422.80px;font-size:26px;font-weight:400;color:#1e2027;letter-spacing:0.647px;">took 4 minutes</div>
<div id="t76" style="position:absolute;left:510.00px;top:1823.80px;font-size:26px;font-weight:700;color:#2451c9;">3</div>
<div id="t77" style="position:absolute;left:642.00px;top:1805.50px;font-size:26px;font-weight:700;color:#2451c9;letter-spacing:0.066px;">Commercial Platform Demo</div>
<div id="t78" style="position:absolute;left:642.00px;top:1844.50px;font-size:24px;font-weight:400;color:#7c7c7c;letter-spacing:-0.358px;">Run ID: 182</div>
<div id="t79" style="position:absolute;left:1314.00px;top:1823.70px;font-size:26px;font-weight:400;color:#1e2027;letter-spacing:-0.066px;">Failed</div>
<div id="t80" style="position:absolute;left:1895.00px;top:1667.10px;font-size:26px;font-weight:400;color:#1e2027;letter-spacing:1.141px;">e2e-commercial-hosted</div>
<div id="t81" style="position:absolute;left:1864.50px;top:1710.00px;font-size:26px;font-weight:400;color:#1e2027;letter-spacing:1.087px;">feature/corruptedexception</div>
<div id="t82" style="position:absolute;left:2275.00px;top:1710.00px;font-size:26px;font-weight:400;color:#1e2027;letter-spacing:0.380px;">main</div>
<div id="t83" style="position:absolute;left:1902.50px;top:1753.10px;font-size:26px;font-weight:400;color:#1e2027;letter-spacing:0.304px;">Updated tasks on...</div>
<div id="t84" style="position:absolute;left:2143.00px;top:1753.10px;font-size:26px;font-weight:400;color:#2451c9;letter-spacing:0.947px;">54607b</div>
<div id="t85" style="position:absolute;left:1908.50px;top:1804.60px;font-size:26px;font-weight:400;color:#1e2027;letter-spacing:0.304px;">Updated tasks on...</div>
<div id="t86" style="position:absolute;left:2147.50px;top:1804.60px;font-size:26px;font-weight:400;color:#2451c9;letter-spacing:2.578px;">#8</div>
<div id="t87" style="position:absolute;left:1861.50px;top:1863.50px;font-size:26px;font-weight:400;color:#1e2027;letter-spacing:0.656px;">Service Deployed:</div>
<div id="t88" style="position:absolute;left:1861.50px;top:1902.90px;font-size:26px;font-weight:400;color:#1e2027;letter-spacing:0.816px;">Boutique - Frontend</div>
<div id="t89" style="position:absolute;left:1861.50px;top:1941.20px;font-size:26px;font-weight:400;color:#1e2027;letter-spacing:0.526px;">Environments:</div>
<div id="t90" style="position:absolute;left:1861.50px;top:1980.00px;font-size:26px;font-weight:400;color:#1e2027;letter-spacing:0.872px;">dev,qa</div>
<div id="t91" style="position:absolute;left:2620.00px;top:1788.30px;font-size:26px;font-weight:400;color:#1e2027;letter-spacing:0.735px;">Mon, 23 Sep 2024 00:00:41 GMT</div>
<div id="t92" style="position:absolute;left:2620.00px;top:1825.90px;font-size:26px;font-weight:400;color:#1e2027;letter-spacing:0.074px;">run 15 days ago</div>
<div id="t93" style="position:absolute;left:2620.00px;top:1861.70px;font-size:26px;font-weight:400;color:#1e2027;letter-spacing:0.647px;">took 4 minutes</div>
<div style="position:absolute;left:457px;top:432px;width:725px;height:395px;background:#fff;border-radius:8px;box-shadow:0 10px 10px -6px rgba(0,0,0,0.2),0 16px 20px 2px rgba(0,0,0,0.14),0 6px 28px 4px rgba(0,0,0,0.12)"></div>
<div style="position:absolute;left:457px;top:532px;width:725px;height:64px;background:#ebebeb"></div>
<div style="position:absolute;left:3360px;top:0px;width:8px;height:1210px;background:#dcdcdc;border-radius:0 0 0 8px"></div>
<div id="t94" style="position:absolute;left:485.00px;top:475.75px;font-size:25px;font-weight:400;color:#707070;letter-spacing:-0.339px;">Services</div>
<div id="t95" style="position:absolute;left:485.00px;top:550.20px;font-size:28px;font-weight:400;color:#1f1f1f;letter-spacing:1.484px;">boutique_frontend</div>
<div id="t96" style="position:absolute;left:485.00px;top:626.75px;font-size:25px;font-weight:400;color:#707070;letter-spacing:-0.369px;">Pipelines</div>
<div id="t97" style="position:absolute;left:485.00px;top:702.20px;font-size:28px;font-weight:400;color:#1f1f1f;letter-spacing:1.120px;">Build and Deploy</div>
<div id="t98" style="position:absolute;left:485.00px;top:765.90px;font-size:28px;font-weight:400;color:#1f1f1f;letter-spacing:1.581px;">Infrastructure</div>
</body></html>
